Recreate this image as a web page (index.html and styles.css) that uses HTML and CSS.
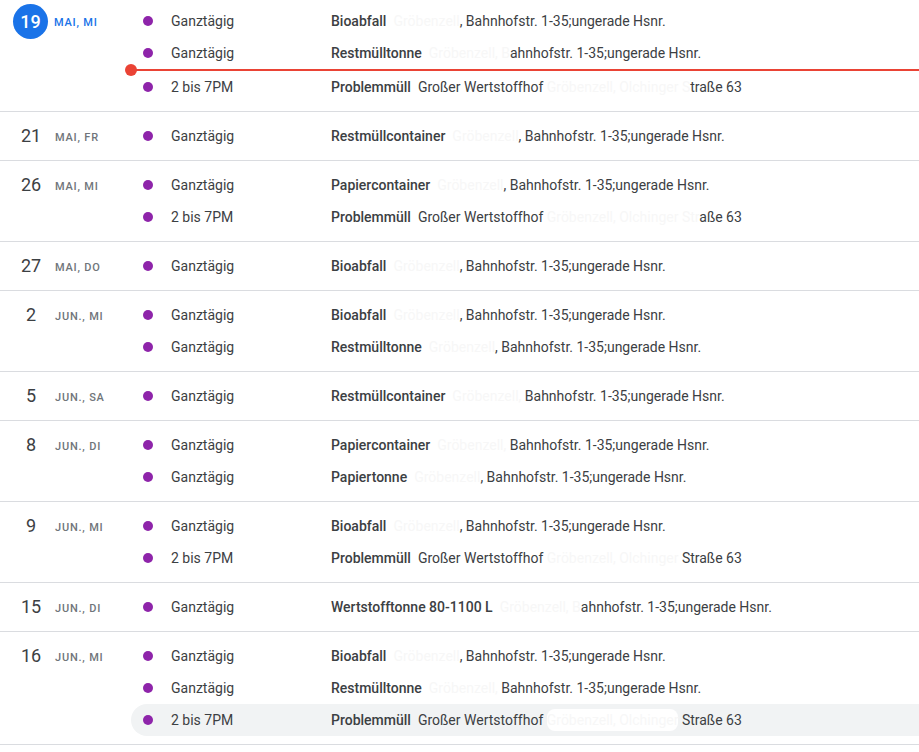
FILE: index.html
```html
<!DOCTYPE html>
<html lang="de">
<head>
<meta charset="utf-8">
<title>Terminübersicht</title>
<link rel="stylesheet" href="styles.css">
</head>
<body>
<main class="schedule">

  <section class="day first">
    <div class="date"><span class="num today">19</span><span class="md today-md">MAI, MI</span></div>
    <div class="events">
      <div class="ev"><span class="dot"></span><span class="time">Ganztägig</span><span class="desc"><span class="title">Bioabfall</span><span class="redact">Gröbenzell</span>, Bahnhofstr. 1-35;ungerade Hsnr.</span></div>
      <div class="ev"><span class="dot"></span><span class="time">Ganztägig</span><span class="desc"><span class="title">Restmülltonne</span><span class="redact">Gröbenzell, B</span>ahnhofstr. 1-35;ungerade Hsnr.</span></div>
      <div class="now"><span class="now-dot"></span></div>
      <div class="ev"><span class="dot"></span><span class="time">2 bis 7PM</span><span class="desc"><span class="title">Problemmüll</span>Großer Wertstoffhof <span class="redact">Gröbenzell, Olchinger S</span>traße 63</span></div>
    </div>
  </section>

  <section class="day">
    <div class="date"><span class="num">21</span><span class="md">MAI, FR</span></div>
    <div class="events">
      <div class="ev"><span class="dot"></span><span class="time">Ganztägig</span><span class="desc"><span class="title">Restmüllcontainer</span><span class="redact">Gröbenzell</span>, Bahnhofstr. 1-35;ungerade Hsnr.</span></div>
    </div>
  </section>

  <section class="day">
    <div class="date"><span class="num">26</span><span class="md">MAI, MI</span></div>
    <div class="events">
      <div class="ev"><span class="dot"></span><span class="time">Ganztägig</span><span class="desc"><span class="title">Papiercontainer</span><span class="redact">Gröbenzell</span>, Bahnhofstr. 1-35;ungerade Hsnr.</span></div>
      <div class="ev"><span class="dot"></span><span class="time">2 bis 7PM</span><span class="desc"><span class="title">Problemmüll</span>Großer Wertstoffhof <span class="redact">Gröbenzell, Olchinger Str</span>aße 63</span></div>
    </div>
  </section>

  <section class="day">
    <div class="date"><span class="num">27</span><span class="md">MAI, DO</span></div>
    <div class="events">
      <div class="ev"><span class="dot"></span><span class="time">Ganztägig</span><span class="desc"><span class="title">Bioabfall</span><span class="redact">Gröbenzell</span>, Bahnhofstr. 1-35;ungerade Hsnr.</span></div>
    </div>
  </section>

  <section class="day">
    <div class="date"><span class="num">2</span><span class="md">JUN., MI</span></div>
    <div class="events">
      <div class="ev"><span class="dot"></span><span class="time">Ganztägig</span><span class="desc"><span class="title">Bioabfall</span><span class="redact">Gröbenzell</span>, Bahnhofstr. 1-35;ungerade Hsnr.</span></div>
      <div class="ev"><span class="dot"></span><span class="time">Ganztägig</span><span class="desc"><span class="title">Restmülltonne</span><span class="redact">Gröbenzell</span>, Bahnhofstr. 1-35;ungerade Hsnr.</span></div>
    </div>
  </section>

  <section class="day">
    <div class="date"><span class="num">5</span><span class="md">JUN., SA</span></div>
    <div class="events">
      <div class="ev"><span class="dot"></span><span class="time">Ganztägig</span><span class="desc"><span class="title">Restmüllcontainer</span><span class="redact">Gröbenzell,</span> Bahnhofstr. 1-35;ungerade Hsnr.</span></div>
    </div>
  </section>

  <section class="day">
    <div class="date"><span class="num">8</span><span class="md">JUN., DI</span></div>
    <div class="events">
      <div class="ev"><span class="dot"></span><span class="time">Ganztägig</span><span class="desc"><span class="title">Papiercontainer</span><span class="redact">Gröbenzell,</span> Bahnhofstr. 1-35;ungerade Hsnr.</span></div>
      <div class="ev"><span class="dot"></span><span class="time">Ganztägig</span><span class="desc"><span class="title">Papiertonne</span><span class="redact">Gröbenzell</span>, Bahnhofstr. 1-35;ungerade Hsnr.</span></div>
    </div>
  </section>

  <section class="day">
    <div class="date"><span class="num">9</span><span class="md">JUN., MI</span></div>
    <div class="events">
      <div class="ev"><span class="dot"></span><span class="time">Ganztägig</span><span class="desc"><span class="title">Bioabfall</span><span class="redact">Gröbenzell</span>, Bahnhofstr. 1-35;ungerade Hsnr.</span></div>
      <div class="ev"><span class="dot"></span><span class="time">2 bis 7PM</span><span class="desc"><span class="title">Problemmüll</span>Großer Wertstoffhof <span class="redact">Gröbenzell, Olchinger</span> Straße 63</span></div>
    </div>
  </section>

  <section class="day">
    <div class="date"><span class="num">15</span><span class="md">JUN., DI</span></div>
    <div class="events">
      <div class="ev"><span class="dot"></span><span class="time">Ganztägig</span><span class="desc"><span class="title">Wertstofftonne 80-1100 L</span><span class="redact">Gröbenzell, B</span>ahnhofstr. 1-35;ungerade Hsnr.</span></div>
    </div>
  </section>

  <section class="day">
    <div class="date"><span class="num">16</span><span class="md">JUN., MI</span></div>
    <div class="events">
      <div class="ev"><span class="dot"></span><span class="time">Ganztägig</span><span class="desc"><span class="title">Bioabfall</span><span class="redact">Gröbenzell</span>, Bahnhofstr. 1-35;ungerade Hsnr.</span></div>
      <div class="ev"><span class="dot"></span><span class="time">Ganztägig</span><span class="desc"><span class="title">Restmülltonne</span><span class="redact">Gröbenzell,</span> Bahnhofstr. 1-35;ungerade Hsnr.</span></div>
      <div class="ev hover"><span class="dot"></span><span class="time">2 bis 7PM</span><span class="desc"><span class="title">Problemmüll</span>Großer Wertstoffhof <span class="redact solid">Gröbenzell, Olchinger</span> Straße 63</span></div>
    </div>
  </section>

</main>
</body>
</html>
```
FILE: styles.css
```css
* { box-sizing: border-box; }

html, body {
  margin: 0;
  padding: 0;
  background: #ffffff;
  overflow: hidden;
}

body {
  font-family: Roboto, "Liberation Sans", Arial, sans-serif;
  font-size: 14px;
  color: #3c4043;
}

.schedule {
  display: flex;
  flex-direction: column;
}

.day {
  display: flex;
  align-items: flex-start;
  padding: 8px 0;
  border-bottom: 1px solid #dadce0;
}

.day.first {
  padding-top: 5px;
}

.date {
  flex: 0 0 131px;
  height: 32px;
  display: flex;
  align-items: center;
}

.num {
  width: 36px;
  margin-left: 13px;
  text-align: center;
  font-size: 18px;
  font-weight: 400;
  color: #3c4043;
  line-height: 34px;
}

.num.today {
  width: 35px;
  height: 35px;
  margin-left: 13px;
  border-radius: 50%;
  background: #1a73e8;
  color: #ffffff;
  font-weight: 500;
  line-height: 35px;
}

.md {
  margin-left: 6px;
  margin-top: 2px;
  font-size: 11px;
  font-weight: 500;
  letter-spacing: 0.8px;
  color: #70757a;
}

.md.today-md {
  color: #1a73e8;
}

.events {
  flex: 1;
  display: flex;
  flex-direction: column;
}

.ev {
  height: 32px;
  display: flex;
  align-items: center;
  white-space: nowrap;
  color: #3c4043;
}

.ev.hover {
  background: #f1f3f4;
  border-radius: 16px 0 0 16px;
}

.dot {
  width: 10px;
  height: 10px;
  margin-left: 12px;
  border-radius: 50%;
  background: #8e24aa;
  flex: none;
}

.time {
  width: 160px;
  margin-left: 18px;
  flex: none;
}

.desc {
  white-space: pre;
}

.title {
  font-weight: 500;
  color: #3c4043;
  margin-right: 7px;
}

.redact {
  background: #ffffff;
  color: #f7f7f7;
  border-radius: 8px;
}

.redact.solid {
  padding: 3px 0;
}

.now {
  position: relative;
  height: 2px;
  background: #ea4335;
}

.now-dot {
  position: absolute;
  left: -6px;
  top: -5px;
  width: 12px;
  height: 12px;
  border-radius: 50%;
  background: #ea4335;
}
```
